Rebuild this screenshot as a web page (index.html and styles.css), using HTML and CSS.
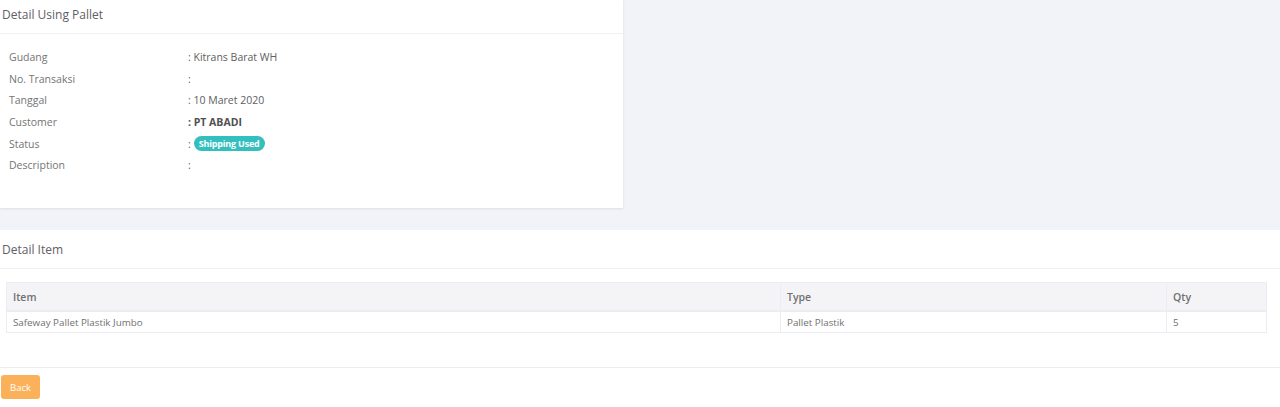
FILE: index.html
```html
<!DOCTYPE html>
<html>
<head>
<meta charset="utf-8">
<link rel="stylesheet" href="styles.css">
</head>
<body>
<div class="card card-detail">
  <div class="card-head"><h3 class="card-title">Detail Using Pallet</h3></div>
  <div class="card-body">
    <div class="info-row"><span class="info-label">Gudang</span><span class="info-value">: Kitrans Barat WH</span></div>
    <div class="info-row"><span class="info-label">No. Transaksi</span><span class="info-value">:</span></div>
    <div class="info-row"><span class="info-label">Tanggal</span><span class="info-value">: 10 Maret 2020</span></div>
    <div class="info-row"><span class="info-label">Customer</span><span class="info-value strong">: PT ABADI</span></div>
    <div class="info-row"><span class="info-label">Status</span><span class="info-value">: <span class="badge">Shipping Used</span></span></div>
    <div class="info-row"><span class="info-label">Description</span><span class="info-value">:</span></div>
  </div>
</div>
<div class="card card-items">
  <div class="card-head head-items"><h3 class="card-title">Detail Item</h3></div>
  <div class="items-body">
    <table class="items-table">
      <colgroup><col class="col-item"><col class="col-type"><col class="col-qty"></colgroup>
      <thead>
        <tr><th>Item</th><th>Type</th><th>Qty</th></tr>
      </thead>
      <tbody>
        <tr><td>Safeway Pallet Plastik Jumbo</td><td>Pallet Plastik</td><td>5</td></tr>
      </tbody>
    </table>
  </div>
  <div class="card-foot"><button class="btn-back">Back</button></div>
</div>
</body>
</html>
```
FILE: styles.css
```css
html, body {
  margin: 0;
  padding: 0;
  background: #f2f3f8;
  font-family: "Open Sans", "Noto Sans", sans-serif;
  color: #5e5e5e;
}
.card {
  background: #fff;
}
.card-detail {
  width: 623px;
  height: 208px;
  box-sizing: border-box;
  box-shadow: 0 1px 2px rgba(80, 80, 100, 0.12);
}
.card-head {
  height: 33px;
  border-bottom: 1px solid #eef0f4;
  display: flex;
  align-items: center;
  padding-left: 2px;
  box-sizing: content-box;
}
.card-title {
  margin: 0;
  font-size: 12px;
  font-weight: 500;
  color: #5f6066;
  position: relative;
  top: -2px;
}
.card-body {
  padding: 12px 0 0 9px;
}
.info-row {
  display: flex;
  height: 21.7px;
  align-items: center;
  font-size: 10.5px;
  color: #747474;
}
.info-label {
  width: 179px;
}
.info-value {
  color: #606060;
  display: flex;
  align-items: center;
}
.info-value.strong {
  font-weight: 700;
  color: #505050;
}
.badge {
  display: inline-block;
  margin-left: 3px;
  background: #34bfbf;
  color: #fff;
  font-size: 9px;
  font-weight: 700;
  letter-spacing: -0.2px;
  line-height: 15px;
  padding: 0 5px;
  border-radius: 8px;
}
.card-items {
  margin-top: 22px;
  min-height: 177px;
}
.head-items {
  height: 38px;
}
.head-items .card-title {
  top: 0;
}
.items-body {
  padding: 13px 14px 34px 6px;
}
.items-table {
  width: 100%;
  table-layout: fixed;
  border-collapse: collapse;
  font-size: 9.8px;
}
.col-item { width: 774px; }
.col-type { width: 386px; }
.col-qty { width: 100px; }
.items-table th, .items-table td {
  border: 1px solid #ebedf2;
  text-align: left;
  padding: 0 0 0 6px;
}
.items-table th {
  background: #f4f4f6;
  height: 27px;
  font-size: 10.5px;
  font-weight: 600;
  color: #707070;
  border-bottom-width: 2px;
}
.items-table td {
  height: 20px;
  color: #707070;
}
.card-foot {
  border-top: 1px solid #ebedf2;
  padding: 7px 0 7px 1px;
}
.btn-back {
  display: block;
  background: #fbb15a;
  border: none;
  border-radius: 3px;
  color: #fff;
  font-family: "Open Sans", "Noto Sans", sans-serif;
  font-size: 9.5px;
  width: 39px;
  height: 24px;
  padding: 0;
}
```
